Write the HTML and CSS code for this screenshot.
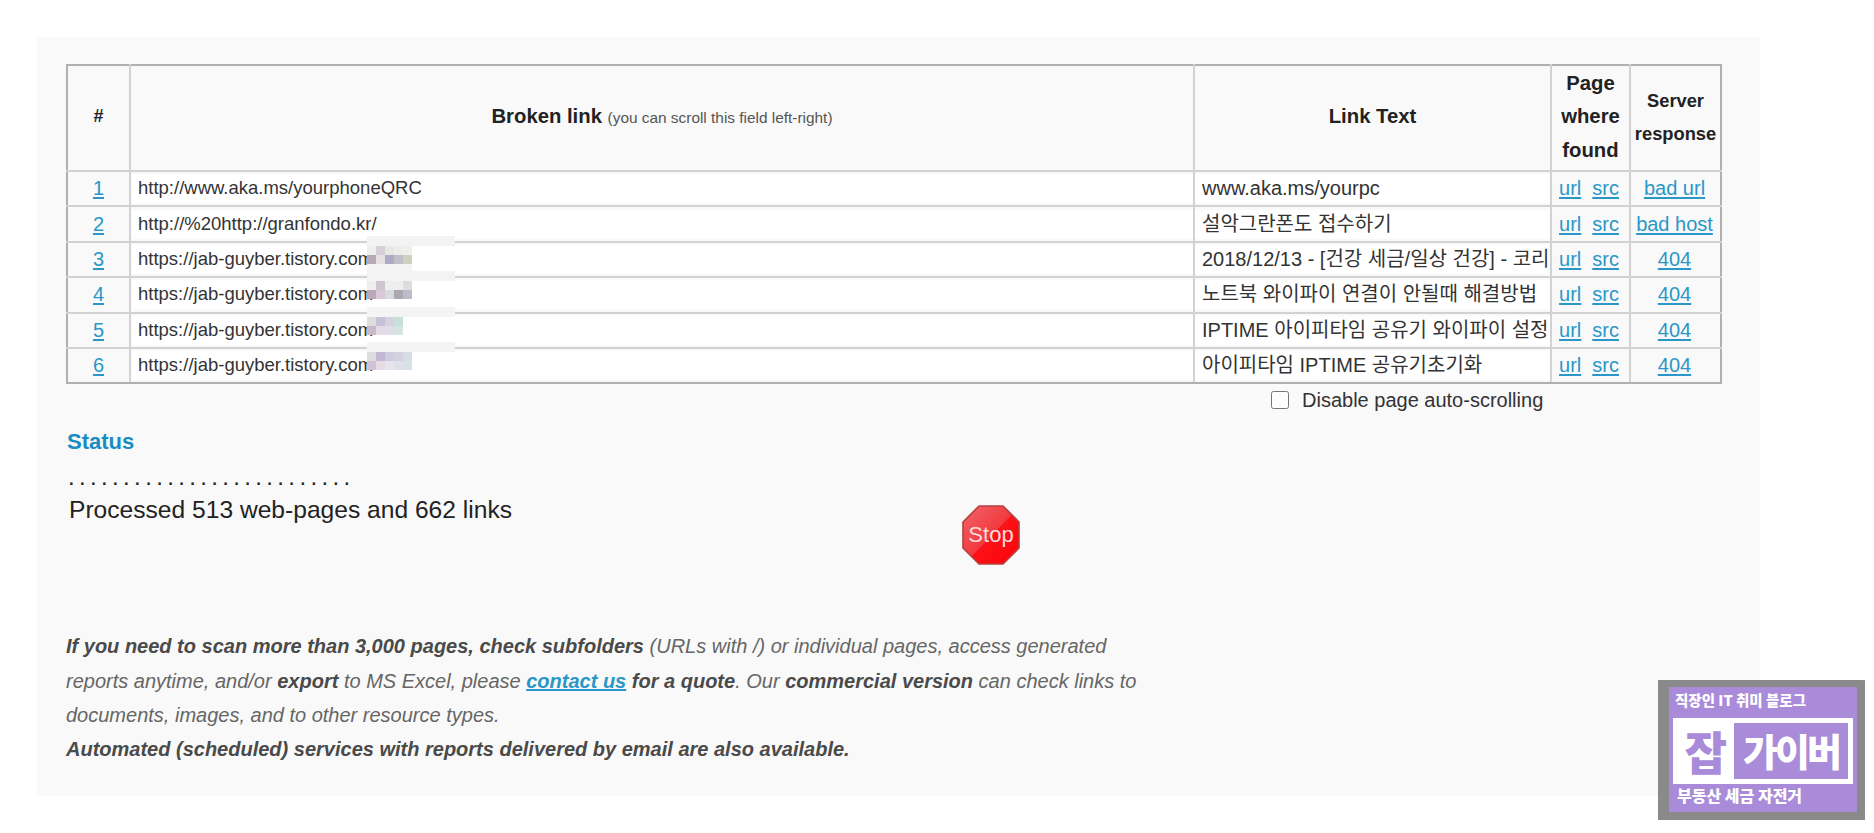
FILE: index.html
```html
<!DOCTYPE html>
<html lang="en">
<head>
<meta charset="utf-8">
<title>Broken link check</title>
<link rel="stylesheet" href="styles.css">
</head>
<body>
<main class="panel">
  <table class="links">
    <colgroup>
      <col class="c-num"><col class="c-url"><col class="c-text"><col class="c-page"><col class="c-resp">
    </colgroup>
    <thead>
      <tr>
        <th class="hash">#</th>
        <th class="broken">Broken link <small>(you can scroll this field left-right)</small></th>
        <th class="linktext">Link Text</th>
        <th class="page">Page where found</th>
        <th class="resp">Server response</th>
      </tr>
    </thead>
    <tbody>
      <tr>
        <td class="num"><a href="#">1</a></td>
        <td class="url-cell"><div class="field">http://www.aka.ms/yourphoneQRC</div></td>
        <td class="text-cell"><div class="field">www.aka.ms/yourpc</div></td>
        <td class="src"><a href="#">url</a><a href="#">src</a></td>
        <td class="status"><a href="#">bad url</a></td>
      </tr>
      <tr>
        <td class="num"><a href="#">2</a></td>
        <td class="url-cell"><div class="field">http://%20http://granfondo.kr/</div></td>
        <td class="text-cell"><div class="field">설악그란폰도 접수하기</div></td>
        <td class="src"><a href="#">url</a><a href="#">src</a></td>
        <td class="status"><a href="#">bad host</a></td>
      </tr>
      <tr>
        <td class="num"><a href="#">3</a></td>
        <td class="url-cell"><div class="field">https://jab-guyber.tistory.com
          <svg class="pix" viewBox="0 0 92 37" aria-hidden="true">
            <rect width="88" height="10" fill="#f3f3f3"/>
            <rect y="10" width="9" height="9" fill="#eee"/><rect x="9" y="10" width="9" height="9" fill="#d8d0d8"/><rect x="18" y="10" width="9" height="9" fill="#e8e8e2"/><rect x="27" y="10" width="9" height="9" fill="#ecece8"/><rect x="36" y="10" width="9" height="9" fill="#eee"/>
            <rect y="19" width="9" height="9" fill="#b8a8b4"/><rect x="9" y="19" width="9" height="9" fill="#e4e0e0"/><rect x="18" y="19" width="9" height="9" fill="#aeaac4"/><rect x="27" y="19" width="9" height="9" fill="#c0c0c8"/><rect x="36" y="19" width="9" height="9" fill="#d0d0c0"/>
            <rect y="28" width="45" height="9" fill="#f4f4f4"/>
          </svg>
        </div></td>
        <td class="text-cell"><div class="field clip">2018/12/13 - [건강 세금/일상 건강] - 코리아</div></td>
        <td class="src"><a href="#">url</a><a href="#">src</a></td>
        <td class="status"><a href="#">404</a></td>
      </tr>
      <tr>
        <td class="num"><a href="#">4</a></td>
        <td class="url-cell"><div class="field">https://jab-guyber.tistory.com
          <svg class="pix" viewBox="0 0 92 37" aria-hidden="true">
            <rect width="88" height="10" fill="#f3f3f3"/>
            <rect y="10" width="9" height="9" fill="#eee"/><rect x="9" y="10" width="9" height="9" fill="#cfc4d0"/><rect x="18" y="10" width="9" height="9" fill="#eee"/><rect x="27" y="10" width="9" height="9" fill="#eee"/><rect x="36" y="10" width="9" height="9" fill="#ddd"/>
            <rect y="19" width="9" height="9" fill="#b8a8b8"/><rect x="9" y="19" width="9" height="9" fill="#d8c8d8"/><rect x="18" y="19" width="9" height="9" fill="#d8dcdc"/><rect x="27" y="19" width="9" height="9" fill="#aaa8b0"/><rect x="36" y="19" width="9" height="9" fill="#bcbccc"/>
          </svg>
        </div></td>
        <td class="text-cell"><div class="field">노트북 와이파이 연결이 안될때 해결방법</div></td>
        <td class="src"><a href="#">url</a><a href="#">src</a></td>
        <td class="status"><a href="#">404</a></td>
      </tr>
      <tr>
        <td class="num"><a href="#">5</a></td>
        <td class="url-cell"><div class="field">https://jab-guyber.tistory.com
          <svg class="pix" viewBox="0 0 92 37" aria-hidden="true">
            <rect width="88" height="10" fill="#f4f4f4"/>
            <rect y="10" width="9" height="9" fill="#ddd"/><rect x="9" y="10" width="9" height="9" fill="#c8c0d8"/><rect x="18" y="10" width="9" height="9" fill="#d8d0e0"/><rect x="27" y="10" width="9" height="9" fill="#c8e0dc"/>
            <rect y="19" width="9" height="9" fill="#c8b8c8"/><rect x="9" y="19" width="9" height="9" fill="#e4dce4"/><rect x="18" y="19" width="9" height="9" fill="#e0dce8"/><rect x="27" y="19" width="9" height="9" fill="#d4e4e0"/>
          </svg>
        </div></td>
        <td class="text-cell"><div class="field">IPTIME 아이피타임 공유기 와이파이 설정</div></td>
        <td class="src"><a href="#">url</a><a href="#">src</a></td>
        <td class="status"><a href="#">404</a></td>
      </tr>
      <tr>
        <td class="num"><a href="#">6</a></td>
        <td class="url-cell"><div class="field">https://jab-guyber.tistory.com
          <svg class="pix" viewBox="0 0 92 37" aria-hidden="true">
            <rect width="88" height="10" fill="#f4f4f4"/>
            <rect y="10" width="9" height="9" fill="#ddd"/><rect x="9" y="10" width="9" height="9" fill="#c0b8d4"/><rect x="18" y="10" width="9" height="9" fill="#d0cce0"/><rect x="27" y="10" width="9" height="9" fill="#d4d0e0"/><rect x="36" y="10" width="9" height="9" fill="#d8dce4"/>
            <rect y="19" width="9" height="9" fill="#d0c0d8"/><rect x="9" y="19" width="9" height="9" fill="#e8dce4"/><rect x="18" y="19" width="9" height="9" fill="#e8e4ec"/><rect x="27" y="19" width="9" height="9" fill="#dde0e8"/><rect x="36" y="19" width="9" height="9" fill="#d8e0e8"/>
          </svg>
        </div></td>
        <td class="text-cell"><div class="field">아이피타임 IPTIME 공유기초기화</div></td>
        <td class="src"><a href="#">url</a><a href="#">src</a></td>
        <td class="status"><a href="#">404</a></td>
      </tr>
    </tbody>
  </table>

  <label class="autoscroll"><input type="checkbox"><span>Disable page auto-scrolling</span></label>

  <h2 class="status-title">Status</h2>
  <div class="dots">..........................</div>
  <div class="progress">
    <p class="processed">Processed 513 web-pages and 662 links</p>
    <svg class="stop" viewBox="0 0 58 60" role="img" aria-label="Stop">
      <defs>
        <linearGradient id="stopfill" x1="0" y1="0" x2="1" y2="1">
          <stop offset="0" stop-color="#f0666a"/>
          <stop offset="0.5" stop-color="#f23a40"/>
          <stop offset="0.52" stop-color="#fb1218"/>
          <stop offset="1" stop-color="#ff0008"/>
        </linearGradient>
      </defs>
      <polygon points="17,1 41,1 57,17 57,43 41,59 17,59 1,43 1,17" fill="url(#stopfill)" stroke="#b5403f" stroke-width="1.6" stroke-linejoin="round"/>
      <text x="29" y="37" text-anchor="middle" class="stop-text">Stop</text>
    </svg>
  </div>

  <p class="note">
    <b>If you need to scan more than 3,000 pages, check subfolders</b> (URLs with /) or individual pages, access generated<br>
    reports anytime, and/or <b>export</b> to MS Excel, please <a href="#"><b>contact us</b></a> <b>for a quote</b>. Our <b>commercial version</b> can check links to<br>
    documents, images, and to other resource types.<br>
    <b>Automated (scheduled) services with reports delivered by email are also available.</b>
  </p>
</main>

<aside class="logo">
  <div class="logo-inner">
    <div class="logo-top">직장인 IT 취미 블로그</div>
    <div class="logo-band">
      <span class="logo-jab">잡</span>
      <span class="logo-name">가이버</span>
    </div>
    <div class="logo-bottom">부동산 세금 자전거</div>
  </div>
</aside>
</body>
</html>
```

FILE: styles.css
```css
* { box-sizing: border-box; }
html, body { margin: 0; height: 100%; overflow: hidden; }
body {
  background: #fff;
  font-family: "Liberation Sans", "Noto Sans CJK KR", Arial, sans-serif;
  color: #222;
}
.panel {
  margin: 37px 0 0 37px;
  width: 1723px;
  height: 759px;
  background: #f9f9f9;
  padding: 27px 0 0 29px;
}
.links {
  border-collapse: collapse;
  table-layout: fixed;
  width: 1654px;
}
.c-num { width: 63px; }
.c-url { width: 1064px; }
.c-text { width: 357px; }
.c-page { width: 79px; }
.c-resp { width: 91px; }
.links th, .links td { border: 2px solid #d2d2d2; padding: 0; }
.links thead th { border-top-color: #b0b0b0; }
.links tbody tr:last-child td { border-bottom-color: #b0b0b0; }
.links tr > :first-child { border-left-color: #b0b0b0; }
.links tr > :last-child { border-right-color: #b0b0b0; }
.links th {
  height: 106px;
  padding-bottom: 2px;
  font-size: 20.3px;
  font-weight: bold;
  line-height: 33.5px;
  text-align: center;
  color: #222;
}
.links th small { font-size: 15.4px; font-weight: normal; color: #555; }
.links th.hash { font-size: 18px; }
.links th.resp { font-size: 18.3px; }
.links td { height: 35.4px; }
.links a { color: #2a97c8; text-decoration: underline; text-underline-offset: 2px; }
.url-cell { font-size: 18.5px; }
.text-cell { font-size: 20px; }
.field {
  position: relative;
  margin: 2px 0;
  height: 29px;
  line-height: 28px;
  padding-left: 7px;
  background: #fff;
  white-space: nowrap;
  color: #333;
}
.clip { overflow: hidden; margin-right: 2px; }
.pix { position: absolute; left: 236px; top: -9px; width: 92px; height: 37px; }
.num, .status, .src { text-align: center; font-size: 20px; }
.src { padding-right: 3px !important; }
.status { padding-right: 2px !important; }
.src a { margin: 0 5.5px; }
.autoscroll {
  display: flex;
  align-items: center;
  gap: 13px;
  margin: 5px 0 0 1205px;
  height: 22px;
  font-size: 20px;
  color: #333;
}
.autoscroll input { margin: 0; width: 18px; height: 18px; }
.status-title {
  margin: 18px 0 0 1px;
  font-size: 22px;
  line-height: 26px;
  font-weight: bold;
  color: #1a8cc4;
}
.dots {
  margin: 10px 0 0 2px;
  font-size: 24px;
  line-height: 24px;
  letter-spacing: 4.35px;
  color: #222;
}
.progress {
  display: flex;
  align-items: flex-start;
  height: 135px;
  margin-top: 5px;
}
.processed {
  margin: 0 0 0 3px;
  font-size: 24.6px;
  line-height: 32px;
  width: 893px;
}
.stop { width: 58px; height: 60px; margin-top: 11px; flex: none; }
.stop-text { font-family: "Liberation Sans", sans-serif; font-size: 22px; fill: #fadada; }
.note {
  margin: 0;
  font-size: 20px;
  line-height: 34.2px;
  font-style: italic;
  color: #666;
}
.note b { color: #4a4a4a; }
.note a { color: #2a97c8; text-decoration: underline; }
.note a b { color: inherit; }
.logo {
  position: absolute;
  left: 1658px;
  top: 680px;
  width: 207px;
  height: 140px;
  background: #8a8a8a;
  padding: 7px 8px 8px 11px;
}
.logo-inner {
  height: 100%;
  background: #a98bd9;
  display: flex;
  flex-direction: column;
  font-family: "Noto Sans CJK KR", sans-serif;
  font-weight: 900;
  color: #fff;
}
.logo-top { height: 31px; line-height: 26px; font-size: 14.5px; padding-left: 6px; white-space: nowrap; }
.logo-band {
  margin: 0 4px;
  height: 66px;
  background: #fff;
  display: flex;
  align-items: stretch;
  padding: 5px;
}
.logo-jab { width: 56px; flex: none; text-align: center; font-size: 46px; line-height: 54px; color: #a98bd9; }
.logo-name { flex: 1; background: #a98bd9; font-size: 38px; line-height: 54px; letter-spacing: -3px; text-align: center; white-space: nowrap; }
.logo-bottom { flex: 1; line-height: 22px; font-size: 16px; padding-left: 8px; white-space: nowrap; overflow: hidden; }
```
